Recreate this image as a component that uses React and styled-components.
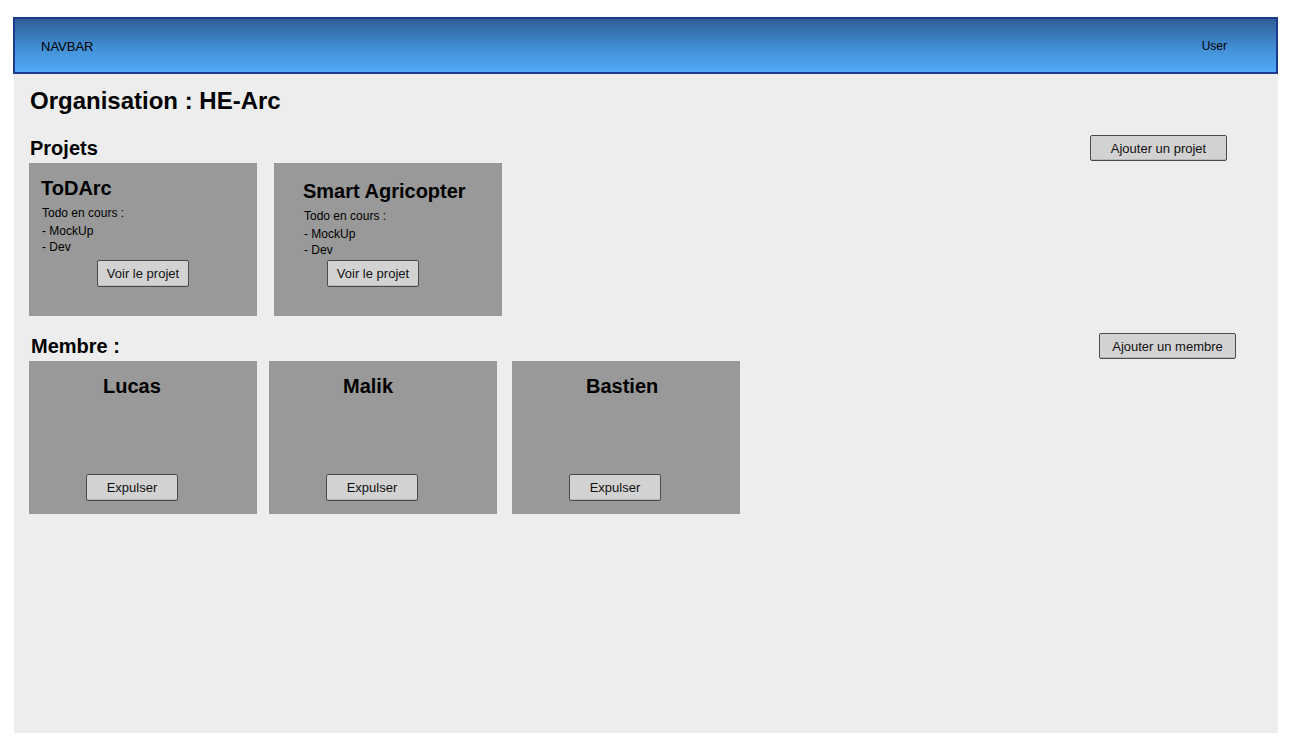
import React from 'react';
import styled, { createGlobalStyle } from 'styled-components';

const GlobalStyle = createGlobalStyle`
  body {
    margin: 0;
    background: #ffffff;
    font-family: "Liberation Sans", Arial, sans-serif;
    color: #000;
  }
`;

const Frame = styled.div`
  margin: 17px 0 0 13px;
  width: 1265px;
`;

const Navbar = styled.div`
  box-sizing: border-box;
  height: 57px;
  border: 2px solid #1d3a8c;
  background: linear-gradient(to bottom, #2f5e97 0%, #4290d6 55%, #52aaf8 100%);
  display: flex;
  align-items: center;
  justify-content: space-between;
  padding: 0 49px 0 26px;
`;

const NavBrand = styled.span`
  font-size: 13px;
  margin-top: 2px;
`;

const NavUser = styled.span`
  font-size: 12px;
`;

const Content = styled.div`
  box-sizing: border-box;
  margin-left: 1px;
  height: 659px;
  background: #ededed;
  padding: 13px 0 0 16px;
`;

const Title = styled.h1`
  margin: 0;
  font-size: 24px;
  line-height: 28px;
  font-weight: bold;
`;

const SectionHeader = styled.div`
  display: flex;
  align-items: center;
  justify-content: space-between;
  height: 26px;
  margin-top: ${p => p.$top}px;
  margin-bottom: 2px;
  padding-right: ${p => p.$right}px;
`;

const SectionTitle = styled.h2`
  margin: 0 0 0 ${p => p.$indent || 0}px;
  font-size: 20px;
  line-height: 24px;
  font-weight: bold;
`;

const SketchButton = styled.button`
  box-sizing: border-box;
  display: block;
  width: ${p => p.$w}px;
  height: ${p => p.$h}px;
  padding: 0;
  background: #d2d2d2;
  border: 1px solid #4a4a4a;
  border-radius: 2px;
  box-shadow: inset 0 -1px 0 #b8b8b8;
  font-family: "Liberation Sans", Arial, sans-serif;
  font-size: 13px;
  color: #111;
  cursor: pointer;
`;

const CardRow = styled.div`
  display: flex;
  margin-left: -1px;
`;

const Card = styled.div`
  box-sizing: border-box;
  width: 228px;
  height: 153px;
  background: #999999;
  margin-left: ${p => p.$gap || 0}px;
`;

const ProjectCard = styled(Card)`
  padding: ${p => p.$pt}px 0 0 ${p => p.$pl}px;
  display: flex;
  flex-direction: column;
  align-items: flex-start;
`;

const ProjectName = styled.h3`
  margin: 0;
  font-size: 20px;
  line-height: 24px;
  font-weight: bold;
`;

const TodoLabel = styled.div`
  margin: 6px 0 0 1px;
  font-size: 12px;
  line-height: 14px;
`;

const TodoList = styled.ul`
  list-style: none;
  margin: 3px 0 0 1px;
  padding: 0;
  font-size: 12px;
  line-height: 16px;
`;

const CardAction = styled.div`
  display: flex;
  margin: ${p => p.$top}px 0 0 ${p => p.$left}px;
`;

const MemberCard = styled(Card)`
  padding: 13px 0 13px 57px;
  display: flex;
  flex-direction: column;
  justify-content: space-between;
  align-items: flex-start;
`;

const MemberName = styled.h3`
  margin: 0 0 0 17px;
  font-size: 20px;
  line-height: 24px;
  font-weight: bold;
`;

const projects = [
  { name: 'ToDArc', todos: ['MockUp', 'Dev'], pt: 13, pl: 12, btnTop: 5, btnLeft: 56, gap: 0 },
  { name: 'Smart Agricopter', todos: ['MockUp', 'Dev'], pt: 16, pl: 29, btnTop: 2, btnLeft: 24, gap: 17 },
];

const members = [
  { name: 'Lucas', gap: 0 },
  { name: 'Malik', gap: 12 },
  { name: 'Bastien', gap: 15 },
];

export default function App() {
  return (
    <>
      <GlobalStyle />
      <Frame>
        <Navbar>
          <NavBrand>NAVBAR</NavBrand>
          <NavUser>User</NavUser>
        </Navbar>
        <Content>
          <Title>Organisation : HE-Arc</Title>

          <SectionHeader $top={20} $right={51}>
            <SectionTitle>Projets</SectionTitle>
            <SketchButton $w={137} $h={26}>Ajouter un projet</SketchButton>
          </SectionHeader>
          <CardRow>
            {projects.map(p => (
              <ProjectCard key={p.name} $pt={p.pt} $pl={p.pl} $gap={p.gap}>
                <ProjectName>{p.name}</ProjectName>
                <TodoLabel>Todo en cours :</TodoLabel>
                <TodoList>
                  {p.todos.map(t => <li key={t}>- {t}</li>)}
                </TodoList>
                <CardAction $top={p.btnTop} $left={p.btnLeft}>
                  <SketchButton $w={92} $h={27}>Voir le projet</SketchButton>
                </CardAction>
              </ProjectCard>
            ))}
          </CardRow>

          <SectionHeader $top={17} $right={42}>
            <SectionTitle $indent={1}>Membre :</SectionTitle>
            <SketchButton $w={137} $h={26}>Ajouter un membre</SketchButton>
          </SectionHeader>
          <CardRow>
            {members.map(m => (
              <MemberCard key={m.name} $gap={m.gap}>
                <MemberName>{m.name}</MemberName>
                <SketchButton $w={92} $h={27}>Expulser</SketchButton>
              </MemberCard>
            ))}
          </CardRow>
        </Content>
      </Frame>
    </>
  );
}
